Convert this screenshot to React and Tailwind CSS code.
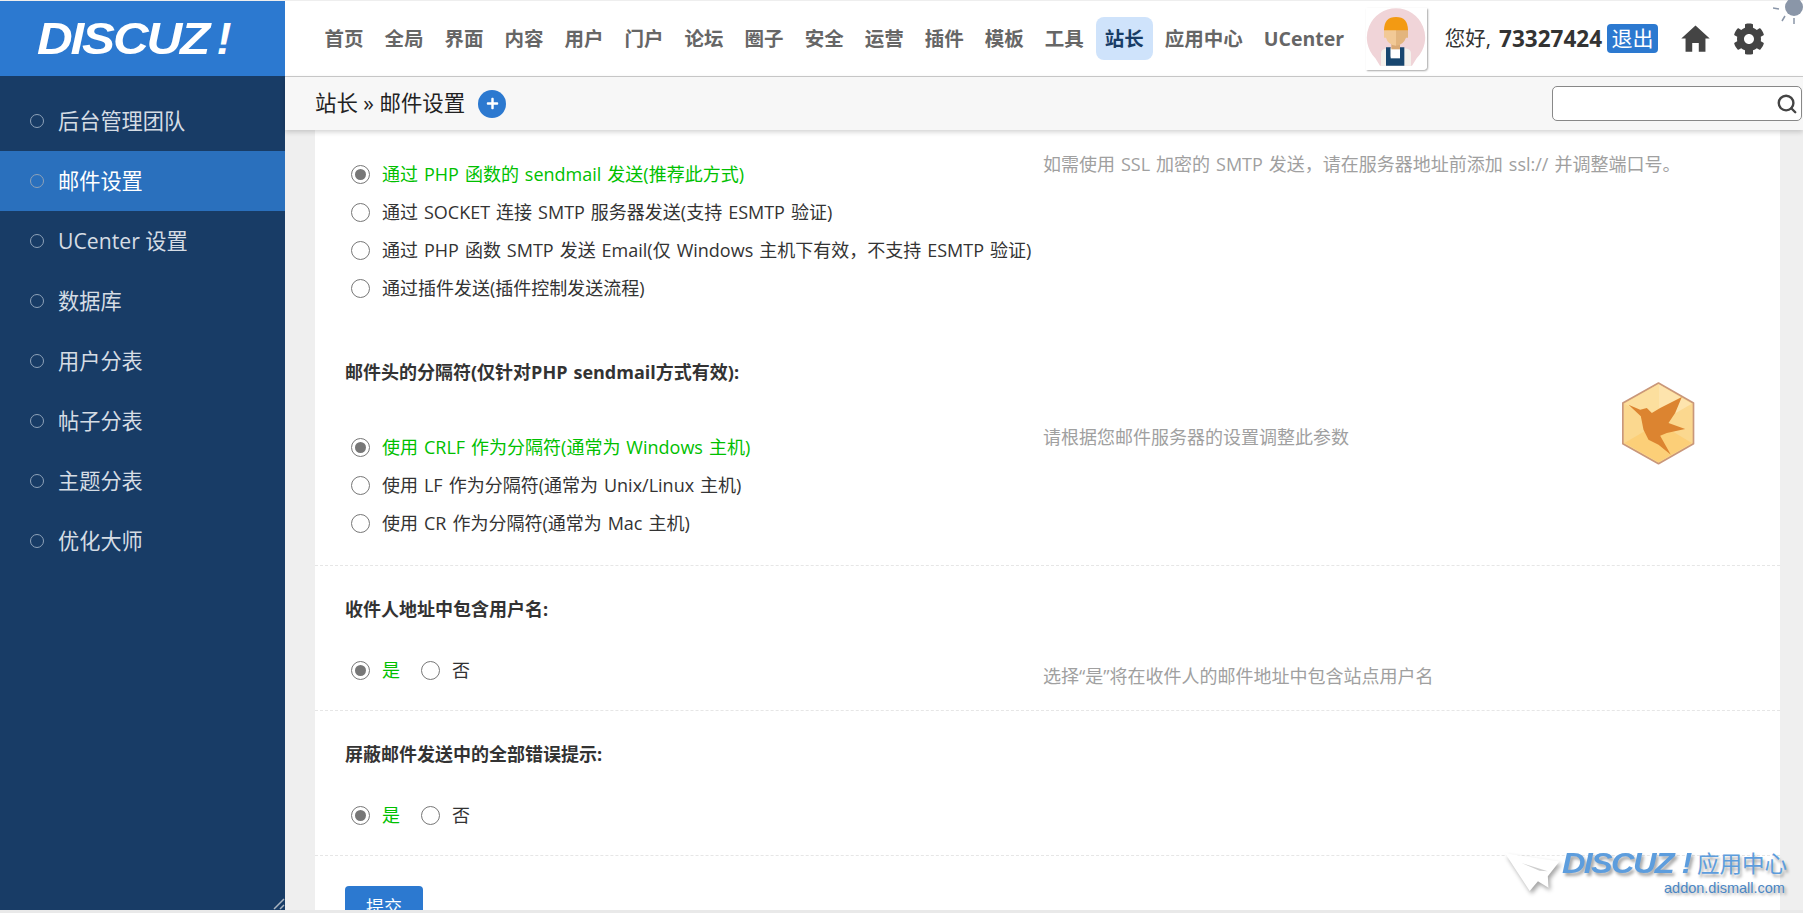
import React from "react";
import { FaPlus, FaCog } from "react-icons/fa";
import { IoMdHome } from "react-icons/io";
import { FiSearch } from "react-icons/fi";

const navItems = ["首页", "全局", "界面", "内容", "用户", "门户", "论坛", "圈子", "安全", "运营", "插件", "模板", "工具", "站长", "应用中心", "UCenter"];
const sideItems = ["后台管理团队", "邮件设置", "UCenter 设置", "数据库", "用户分表", "帖子分表", "主题分表", "优化大师"];

const Radio = ({ checked }) => (
  <span className="flex h-[19px] w-[19px] shrink-0 items-center justify-center rounded-full border-[1.5px] border-[#777] bg-white">
    {checked && <span className="h-[11px] w-[11px] rounded-full bg-[#777]" />}
  </span>
);

// one option on its own line
const Option = ({ checked, children }) => (
  <div className={`flex h-[38px] items-center gap-3 pl-[6px] ${checked ? "text-[#00c000]" : "text-[#333]"}`}>
    <Radio checked={checked} />
    <span className="whitespace-nowrap">{children}</span>
  </div>
);

// yes / no pair
const YesNo = () => (
  <div className="flex h-[38px] items-center pl-[6px]">
    <Radio checked />
    <span className="ml-3 text-[#00c000]">是</span>
    <span className="ml-[21px]">
      <Radio />
    </span>
    <span className="ml-3 text-[#333]">否</span>
  </div>
);

const Heading = ({ children }) => (
  <div className="flex h-[38px] items-center font-bold text-[#333]">{children}</div>
);

const Hint = ({ className, children }) => (
  <div className={`whitespace-nowrap text-[#a0a0a0] leading-[18px] ${className || ""}`}>{children}</div>
);

const Avatar = () => (
  <svg viewBox="80 28 183 184" className="h-[62px] w-[61px] rounded-br-[4px] shadow-[1px_1px_2px_rgba(0,0,0,0.35)]">
    <rect x="80" y="28" width="183" height="184" fill="#fff" />
    <path d="M170 28a88 88 0 0 1 62 150l-14 22h-96l-14-22a88 88 0 0 1 62-150z" fill="#f0d4d8" />
    <path d="M125 200v-38q0-12 20-14h50q20 2 20 14v38z" fill="#f4f1ec" />
    <path d="M140 200v-55h14v28h28v-28h13v55z" fill="#17466f" />
    <rect x="154" y="148" width="28" height="30" fill="#fff" />
    <rect x="156" y="125" width="26" height="26" fill="#d9a975" />
    <path d="M134 92h36v48q-24-2-30-24h-6z" fill="#f2c996" />
    <path d="M170 92h36v24h-6q-8 22-30 24z" fill="#e3b57e" />
    <path d="M134 94q0-40 36-40t36 40z" fill="#f39a12" />
  </svg>
);

const BirdBadge = () => (
  <svg viewBox="120 64 230 252" className="absolute left-[1335px] top-[251px] h-[84px] w-[77px]">
    <path d="M235 70l105 60v122l-105 60-107-60V130z" fill="#fbd88f" stroke="#c9977a" strokeWidth="5" strokeLinejoin="round" />
    <path d="M235 74l100 58-100 58z" fill="#fde4ad" />
    <path d="M235 190l100 60-100 58-102-58z" fill="#fccf78" />
    <path d="M235 74v116l-102-58z" fill="#fcdf9e" />
    <path d="M145 135l35 15 20-5 15 15 25-15 65-33-20 48-20 30 50 18-55 12-20 8 32 57-37-30-30-15-15-30-8-40z" fill="#dc8430" />
  </svg>
);

const Watermark = () => (
  <div className="pointer-events-none absolute left-[1220px] top-[722px] h-[57px] w-[290px]">
    <svg viewBox="165 160 170 120" className="absolute left-0 top-0 h-[42px] w-[56px] drop-shadow-[2px_3px_2px_rgba(0,0,0,0.35)]">
      <path d="M165 160l165 25-35 45 2 35-32-20-25 30z" fill="#fff" />
      <path d="M215 190l80 25-25-2z" fill="#cfcfcf" />
    </svg>
    <div className="absolute left-[57px] top-[-10px] flex items-center whitespace-nowrap text-[#5d9ddd] [text-shadow:2px_3px_3px_rgba(0,0,0,0.35)]">
      <span className="origin-left scale-x-[1.12] font-['Liberation_Sans'] text-[29px] font-bold italic tracking-[-1.5px]">DISCUZ !</span>
      <span className="ml-[20px] text-[22.5px]">应用中心</span>
    </div>
    <div className="absolute left-[159px] top-[26px] whitespace-nowrap font-['Liberation_Sans'] text-[14.5px] text-[#4a86c4] [text-shadow:2px_2px_3px_rgba(0,0,0,0.35)]">
      addon.dismall.com
    </div>
  </div>
);

const App = () => {
  return (
    <div className="flex h-[913px] w-full flex-col overflow-hidden bg-[#e9e9e9] font-['Open_Sans','Noto_Sans_CJK_SC',sans-serif]">
      <div className="h-px shrink-0 bg-[#eeeeee]" />
      <div className="flex min-h-0 flex-1">
        {/* Sidebar */}
        <aside className="relative flex w-[285px] shrink-0 flex-col bg-[#183c66]">
          <div className="flex h-[75px] shrink-0 items-center bg-[#2c79d0] pl-[37px] text-white">
            <span className="origin-left scale-x-[1.1] font-['Liberation_Sans'] text-[45px] font-bold italic leading-none tracking-[-2px]">DISCUZ</span>
            <span className="ml-[24px] font-['Liberation_Sans'] text-[45px] font-bold italic leading-none">!</span>
          </div>
          <nav className="pt-[15px]">
            {sideItems.map((item, i) => (
              <div
                key={item}
                className={`flex h-[60px] items-center pl-[30px] text-[21.2px] ${i === 1 ? "bg-[#2a70bd] text-white" : "text-[#d5dce4]"}`}
              >
                <span className="mr-[14px] h-[14px] w-[14px] rounded-full border border-[#8ea2b8]" />
                {item}
              </div>
            ))}
          </nav>
          <svg viewBox="0 0 12 12" className="absolute bottom-0 right-0 h-[12px] w-[12px]">
            <path d="M1 11L11 1M7 11l4-4" stroke="#aab4c0" strokeWidth="1.5" />
          </svg>
        </aside>

        <div className="flex min-w-0 flex-1 flex-col">
          {/* Top nav */}
          <header className="flex h-[76px] shrink-0 items-center border-b border-[#cccccc] bg-white pl-[29px]">
            {navItems.map((item) => (
              <a
                key={item}
                className={`mx-[1.5px] flex h-[43px] items-center rounded-[8px] px-[9px] text-[19.5px] font-bold ${item === "站长" ? "bg-[#cfe3fb] text-[#183c66]" : "text-[#666]"}`}
              >
                {item}
              </a>
            ))}
            <div className="ml-auto flex items-center pr-[38px]">
              <Avatar />
              <span className="ml-[18px] text-[20.5px] text-[#333]">您好,</span>
              <b className="ml-[8px] text-[22.5px] text-[#333]">73327424</b>
              <a className="ml-[5px] flex h-[29px] w-[51px] items-center justify-center rounded-[4px] bg-[#2c79d0] text-[21px] text-white">退出</a>
              <IoMdHome className="ml-[20px] text-[35px] text-[#444]" />
              <FaCog className="ml-[20px] text-[32px] text-[#444]" />
            </div>
          </header>

          {/* Breadcrumb bar */}
          <div className="relative z-10 flex h-[53px] shrink-0 items-center bg-[#f7f7f7] pl-[30px] pr-px shadow-[0_2px_5px_rgba(0,0,0,0.18)]">
            <span className="text-[21.4px] text-[#222]">站长 » 邮件设置</span>
            <span className="ml-[13px] flex h-[28px] w-[28px] items-center justify-center rounded-full bg-[#2c79d0] text-[13px] text-white">
              <FaPlus />
            </span>
            <div className="ml-auto flex h-[35px] w-[250px] items-center justify-end rounded-[5px] border border-[#888] bg-white pr-[3px]">
              <FiSearch className="text-[22px] text-[#444] [stroke-width:2.6]" />
            </div>
          </div>

          {/* Settings form */}
          <main className="relative min-h-0 flex-1 overflow-hidden bg-[#efefef] pl-[30px] pr-[23px] text-[18px] [word-spacing:1.3px]">
            <div className="h-full bg-white">
              <div className="px-[30px] pb-[23px] pt-[25px]">
                <div className="flex">
                  <div className="w-[698px] shrink-0">
                    <Option checked>通过 PHP 函数的 sendmail 发送(推荐此方式)</Option>
                    <Option>通过 SOCKET 连接 SMTP 服务器发送(支持 ESMTP 验证)</Option>
                    <Option>通过 PHP 函数 SMTP 发送 Email(仅 Windows 主机下有效，不支持 ESMTP 验证)</Option>
                    <Option>通过插件发送(插件控制发送流程)</Option>
                  </div>
                  <Hint>如需使用 SSL 加密的 SMTP 发送，请在服务器地址前添加 ssl:// 并调整端口号。</Hint>
                </div>
                <div className="mt-[46px]">
                  <Heading>邮件头的分隔符(仅针对PHP sendmail方式有效):</Heading>
                </div>
                <div className="mt-[37px] flex">
                  <div className="w-[698px] shrink-0">
                    <Option checked>使用 CRLF 作为分隔符(通常为 Windows 主机)</Option>
                    <Option>使用 LF 作为分隔符(通常为 Unix/Linux 主机)</Option>
                    <Option>使用 CR 作为分隔符(通常为 Mac 主机)</Option>
                  </div>
                  <Hint>请根据您邮件服务器的设置调整此参数</Hint>
                </div>
              </div>

              <div className="border-t border-dashed border-[#e6e6e6] px-[30px] pb-[21px] pt-[24px]">
                <Heading>收件人地址中包含用户名:</Heading>
                <div className="mt-[23px] flex">
                  <div className="w-[698px] shrink-0">
                    <YesNo />
                  </div>
                  <Hint className="mt-[16px]">选择“是”将在收件人的邮件地址中包含站点用户名</Hint>
                </div>
              </div>

              <div className="border-t border-dashed border-[#e6e6e6] px-[30px] pb-[21px] pt-[24px]">
                <Heading>屏蔽邮件发送中的全部错误提示:</Heading>
                <div className="mt-[23px]">
                  <YesNo />
                </div>
              </div>

              <div className="border-t border-dashed border-[#e6e6e6] px-[30px] pt-[30px]">
                <button className="h-[42px] w-[78px] rounded-[4px] bg-[#2c79d0] text-[18px] text-white">提交</button>
              </div>
            </div>
            <BirdBadge />
            <Watermark />
          </main>
        </div>
      </div>
      <div className="h-[3px] shrink-0 bg-[#e9e9e9]" />

      {/* Sun in the corner */}
      <svg viewBox="0 0 30 24" className="absolute right-0 top-0 h-[24px] w-[30px]">
        <circle cx="21" cy="7" r="9" fill="#8a96a8" />
        <path d="M0 8l6 1M9 21l3-5M21 24v-6" stroke="#8a96a8" strokeWidth="1.5" />
      </svg>
    </div>
  );
};

export default App;
